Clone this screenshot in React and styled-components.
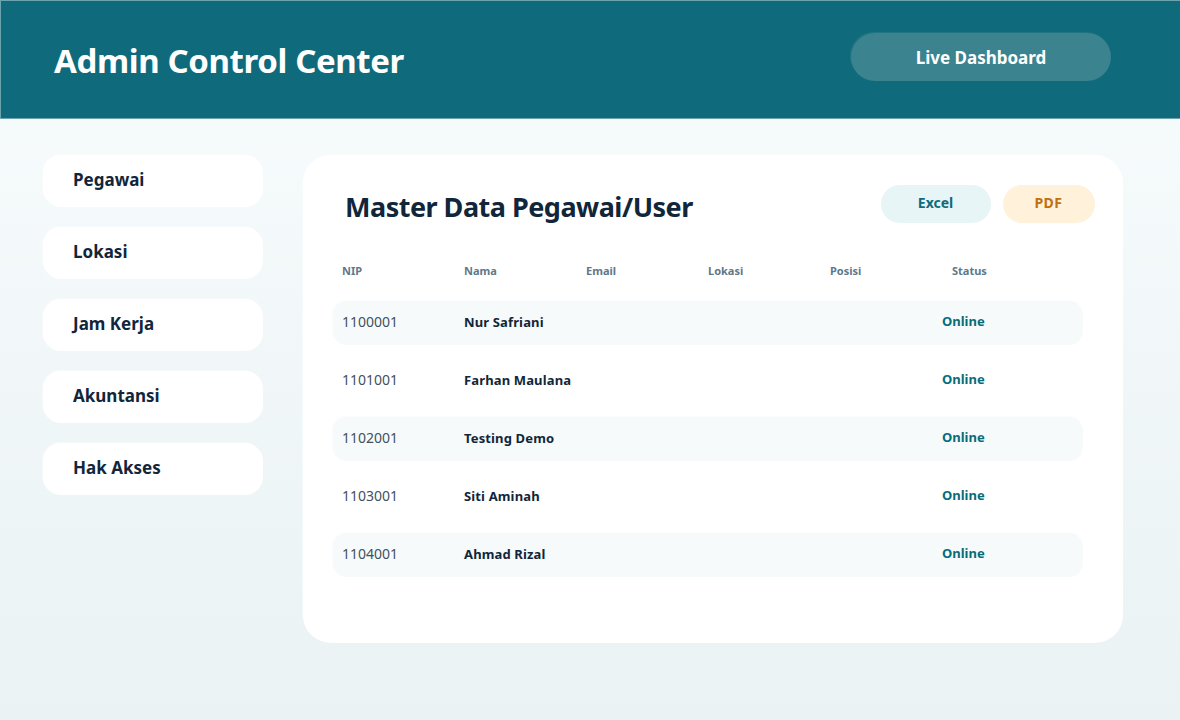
import React from "react";
import styled, { createGlobalStyle } from "styled-components";

const Global = createGlobalStyle`
  html, body { margin: 0; padding: 0; }
  body { font-family: "Noto Sans", "Open Sans", sans-serif; }
`;

const Page = styled.div`
  width: 1180px;
  height: 720px;
  overflow: hidden;
  display: flex;
  flex-direction: column;
  background: linear-gradient(180deg, #f8fcfd 0%, #eaf2f4 100%);
`;

const Header = styled.header`
  box-sizing: border-box;
  height: 119px;
  flex: none;
  display: flex;
  align-items: flex-start;
  justify-content: space-between;
  padding: 32px 69px 0 53px;
  background: #0f6b7b;
  border: 1px solid #6ba3ae;
  border-width: 1px 0 1px 1px;
`;

const Brand = styled.h1`
  margin: 5px 0 0;
  font-size: 33px;
  line-height: 46px;
  font-weight: 700;
  letter-spacing: -0.38px;
  color: #ffffff;
`;

const LiveButton = styled.div`
  box-sizing: border-box;
  width: 260px;
  height: 48px;
  display: flex;
  align-items: center;
  justify-content: center;
  border-radius: 24px;
  background: #3b838f;
  box-shadow: -1px -1px 0 rgba(59, 131, 143, 0.4);
  color: #ffffff;
  font-size: 17px;
  font-weight: 700;
`;

const Body = styled.div`
  display: flex;
  align-items: flex-start;
  gap: 40px;
  padding: 36px 57px 0 43px;
`;

const Sidebar = styled.nav`
  width: 220px;
  flex: none;
  display: flex;
  flex-direction: column;
  gap: 20px;
`;

const NavItem = styled.div`
  box-sizing: border-box;
  height: 52px;
  display: flex;
  align-items: center;
  padding: 0 0 4px 30px;
  border-radius: 18px;
  background: #ffffff;
  box-shadow: -1px -1px 0 rgba(255, 255, 255, 0.35);
  color: #11263a;
  font-size: 17px;
  font-weight: 700;
`;

const Panel = styled.main`
  box-sizing: border-box;
  width: 820px;
  height: 488px;
  padding: 30px 28px 0 30px;
  border-radius: 28px;
  background: #ffffff;
  box-shadow: -1px -1px 0 rgba(255, 255, 255, 0.35);
`;

const PanelHead = styled.div`
  height: 46px;
  display: flex;
  align-items: flex-start;
  justify-content: space-between;
`;

const Title = styled.h2`
  margin: 2px 0 0 12px;
  font-size: 27px;
  line-height: 40px;
  font-weight: 700;
  letter-spacing: -0.5px;
  color: #11263a;
`;

const Actions = styled.div`
  display: flex;
  gap: 12px;
`;

const Action = styled.div`
  box-sizing: border-box;
  width: ${(p) => p.$w}px;
  height: 38px;
  display: flex;
  align-items: center;
  justify-content: center;
  padding: 0 1px 4px 0;
  border-radius: 19px;
  background: ${(p) => p.$bg};
  color: ${(p) => p.$fg};
  font-size: 14px;
  font-weight: 700;
  letter-spacing: ${(p) => p.$track || 0}px;
`;

const Columns = styled.div`
  display: grid;
  grid-template-columns: repeat(6, 122px);
  width: 750px;
  box-sizing: border-box;
  padding-left: 9px;
  align-items: center;
`;

const HeadRow = styled(Columns)`
  height: 46px;
  margin-top: 16px;
  margin-bottom: 8px;
  color: #61778a;
  font-size: 11px;
  font-weight: 700;
`;

const Rows = styled.div`
  display: flex;
  flex-direction: column;
  gap: 14px;
`;

const Row = styled(Columns)`
  height: 44px;
  padding-bottom: 3px;
  border-radius: 14px;
  background: ${(p) => (p.$alt ? "#f6fafb" : "#ffffff")};
  box-shadow: ${(p) => (p.$alt ? "-1px -1px 0 rgba(246, 250, 251, 0.5)" : "none")};
`;

const Nip = styled.span`
  font-size: 14px;
  color: #40515f;
`;

const Name = styled.span`
  font-size: 13px;
  letter-spacing: 0.14px;
  font-weight: 700;
  color: #11263a;
  white-space: nowrap;
`;

const Empty = styled.span``;

const Status = styled.span`
  font-size: 13px;
  font-weight: 700;
  color: #0a6b78;
  margin-left: -10px;
  margin-top: -1px;
`;

const nav = ["Pegawai", "Lokasi", "Jam Kerja", "Akuntansi", "Hak Akses"];
const cols = ["NIP", "Nama", "Email", "Lokasi", "Posisi", "Status"];
const people = [
  ["1100001", "Nur Safriani"],
  ["1101001", "Farhan Maulana"],
  ["1102001", "Testing Demo"],
  ["1103001", "Siti Aminah"],
  ["1104001", "Ahmad Rizal"],
];

export default function App() {
  return (
    <Page>
      <Global />
      <Header>
        <Brand>Admin Control Center</Brand>
        <LiveButton>Live Dashboard</LiveButton>
      </Header>
      <Body>
        <Sidebar>
          {nav.map((n) => (
            <NavItem key={n}>{n}</NavItem>
          ))}
        </Sidebar>
        <Panel>
          <PanelHead>
            <Title>Master Data Pegawai/User</Title>
            <Actions>
              <Action $w={110} $bg="#e7f5f7" $fg="#0f6b7b">Excel</Action>
              <Action $w={92} $bg="#fff1da" $fg="#c0700f" $track={0.5}>PDF</Action>
            </Actions>
          </PanelHead>
          <HeadRow>
            {cols.map((c) => (
              <span key={c}>{c}</span>
            ))}
          </HeadRow>
          <Rows>
            {people.map(([nip, name], i) => (
              <Row key={nip} $alt={i % 2 === 0}>
                <Nip>{nip}</Nip>
                <Name>{name}</Name>
                <Empty />
                <Empty />
                <Empty />
                <Status>Online</Status>
              </Row>
            ))}
          </Rows>
        </Panel>
      </Body>
    </Page>
  );
}
